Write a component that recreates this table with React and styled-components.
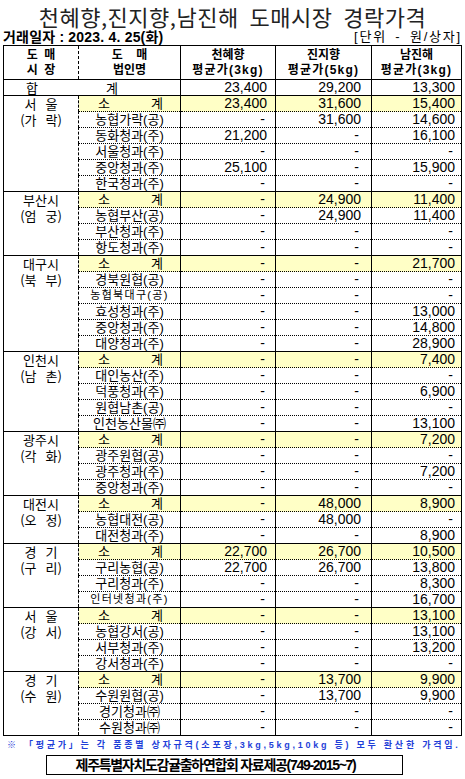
import React from "react";
import styled, { createGlobalStyle } from "styled-components";

const GlobalStyle = createGlobalStyle`
  html, body {
    margin: 0;
    padding: 0;
    background: #fff;
  }
  body {
    font-family: "Liberation Sans Narrow", "Liberation Sans", "Noto Sans CJK KR", sans-serif;
    color: #000;
  }
`;

const Page = styled.div`
  width: 465px;
`;

const Title = styled.h1`
  margin: 0 0 -3px;
  height: 32px;
  line-height: 32px;
  font-family: "Noto Sans CJK KR", sans-serif;
  font-size: 22px;
  font-weight: 400;
  letter-spacing: 0.5px;
  color: #222;
  text-align: center;
  white-space: pre;
`;

const InfoBar = styled.div`
  display: flex;
  justify-content: space-between;
  align-items: center;
  height: 16px;
  padding: 0 3px 0 3px;
  line-height: 16px;
`;

const TradeDate = styled.span`
  font-family: "Liberation Sans", "Noto Sans CJK KR", sans-serif;
  font-size: 14px;
  font-weight: 700;
  letter-spacing: 0.2px;
`;

const Unit = styled.span`
  font-family: "Liberation Sans", "Noto Sans CJK KR", sans-serif;
  font-size: 13px;
  letter-spacing: 1.8px;
  word-spacing: 3px;
`;

const Sheet = styled.table`
  border-collapse: collapse;
  table-layout: fixed;
  width: 459px;
  margin-left: 3px;
  border: 1px solid #000;
  font-size: 13px;
`;

const HeadCell = styled.th`
  height: 33px;
  padding: 0;
  border-right: 1px ${(p) => (p.$dashed ? "dashed" : "solid")} #000;
  border-bottom: 1px solid #000;
  font-family: "Liberation Sans", "Noto Sans CJK KR", sans-serif;
  font-size: 12px;
  font-weight: 700;
  line-height: 15px;
  text-align: center;
  vertical-align: middle;
`;

const HeadLine = styled.div`
  white-space: pre;
  letter-spacing: ${(p) => (p.$wide ? "1.2px" : "0")};
`;

const Row = styled.tr`
  height: 16px;
`;

const TotalCell = styled.td`
  padding: 0 0 0 22px;
  border-right: 1px solid #000;
  border-bottom: 1px solid #000;
  line-height: 15px;
`;

const TotalLabel = styled.div`
  display: flex;
  gap: 68px;
  font-family: "Noto Sans CJK KR", sans-serif;
`;

const MarketCell = styled.td`
  padding: 0;
  border-top: 1px solid #000;
  border-right: 1px dashed #000;
  vertical-align: top;
  text-align: center;
  font-family: "Noto Sans CJK KR", sans-serif;
  line-height: 16px;
  word-spacing: 6px;
  white-space: pre;
`;

const NameCell = styled.td`
  padding: 0;
  border-top: 1px ${(p) => (p.$first ? "solid" : "dotted")} #000;
  border-right: 1px solid #000;
  background: ${(p) => (p.$sub ? "#ffffc6" : "transparent")};
  text-align: center;
  line-height: 15px;
  font-size: ${(p) => (p.$tight ? "11px" : "13px")};
  letter-spacing: ${(p) => (p.$tight ? "1.3px" : "0")};
  white-space: nowrap;
`;

const SubLabel = styled.div`
  display: flex;
  justify-content: space-between;
  padding: 0 17px 0 19px;
`;

const NumCell = styled.td`
  padding: 0 ${(p) => p.$pad}px 0 0;
  border-top: 1px ${(p) => (p.$first ? "solid" : "dotted")} #000;
  border-right: 1px solid #000;
  background: ${(p) => (p.$sub ? "#ffffc6" : "transparent")};
  text-align: right;
  font-size: 14px;
  line-height: 15px;
  white-space: nowrap;
`;

const Dash = styled.span`
  display: inline-block;
  padding-right: 2px;
`;

const Note = styled.p`
  margin: 1px 0 0;
  padding-left: 7px;
  height: 16px;
  line-height: 16px;
  font-family: "Liberation Sans", "Noto Sans CJK KR", sans-serif;
  font-size: 9px;
  font-weight: 700;
  letter-spacing: 2.75px;
  color: #1f3fd8;
  white-space: nowrap;
`;

const SourceBox = styled.div`
  box-sizing: border-box;
  width: 357px;
  height: 20px;
  margin: 2px 0 0 46px;
  padding-right: 18px;
  border: 1px solid #000;
  text-align: center;
  line-height: 18px;
  font-family: "Liberation Sans", "Noto Sans CJK KR", sans-serif;
  font-size: 14px;
  font-weight: 700;
  letter-spacing: -1.3px;
`;

const columns = [
  { width: 75 },
  { width: 102 },
  { width: 95, pad: 8 },
  { width: 96, pad: 10 },
  { width: 90, pad: 6 },
];

const groups = [
  {
    market: ["서 울", "(가 락)"],
    rows: [
      ["소계", "23,400", "31,600", "15,400"],
      ["농협가락(공)", "-", "31,600", "14,600"],
      ["동화청과(주)", "21,200", "-", "16,100"],
      ["서울청과(주)", "-", "-", "-"],
      ["중앙청과(주)", "25,100", "-", "15,900"],
      ["한국청과(주)", "-", "-", "-"],
    ],
  },
  {
    market: ["부산시", "(엄 궁)"],
    rows: [
      ["소계", "-", "24,900", "11,400"],
      ["농협부산(공)", "-", "24,900", "11,400"],
      ["부산청과(주)", "-", "-", "-"],
      ["항도청과(주)", "-", "-", "-"],
    ],
  },
  {
    market: ["대구시", "(북 부)"],
    rows: [
      ["소계", "-", "-", "21,700"],
      ["경북원협(공)", "-", "-", "-"],
      ["농협북대구(공)", "-", "-", "-"],
      ["효성청과(주)", "-", "-", "13,000"],
      ["중앙청과(주)", "-", "-", "14,800"],
      ["대양청과(주)", "-", "-", "28,900"],
    ],
  },
  {
    market: ["인천시", "(남 촌)"],
    rows: [
      ["소계", "-", "-", "7,400"],
      ["대인농산(주)", "-", "-", "-"],
      ["덕풍청과(주)", "-", "-", "6,900"],
      ["원협남촌(공)", "-", "-", "-"],
      ["인천농산물㈜", "-", "-", "13,100"],
    ],
  },
  {
    market: ["광주시", "(각 화)"],
    rows: [
      ["소계", "-", "-", "7,200"],
      ["광주원협(공)", "-", "-", "-"],
      ["광주청과(주)", "-", "-", "7,200"],
      ["중앙청과(주)", "-", "-", "-"],
    ],
  },
  {
    market: ["대전시", "(오 정)"],
    rows: [
      ["소계", "-", "48,000", "8,900"],
      ["농협대전(공)", "-", "48,000", "-"],
      ["대전청과(주)", "-", "-", "8,900"],
    ],
  },
  {
    market: ["경 기", "(구 리)"],
    rows: [
      ["소계", "22,700", "26,700", "10,500"],
      ["구리농협(공)", "22,700", "26,700", "13,800"],
      ["구리청과(주)", "-", "-", "8,300"],
      ["인터넷청과(주)", "-", "-", "16,700"],
    ],
  },
  {
    market: ["서 울", "(강 서)"],
    rows: [
      ["소계", "-", "-", "13,100"],
      ["농협강서(공)", "-", "-", "13,100"],
      ["서부청과(주)", "-", "-", "13,200"],
      ["강서청과(주)", "-", "-", "-"],
    ],
  },
  {
    market: ["경 기", "(수 원)"],
    rows: [
      ["소계", "-", "13,700", "9,900"],
      ["수원원협(공)", "-", "13,700", "9,900"],
      ["경기청과㈜", "-", "-", "-"],
      ["수원청과㈜", "-", "-", "-"],
    ],
  },
];

const varieties = [
  ["천혜향", "평균가(3kg)"],
  ["진지향", "평균가(5kg)"],
  ["남진해", "평균가(3kg)"],
];

const tightNames = ["농협북대구(공)", "인터넷청과(주)"];

function Price({ value, pad, first, sub }) {
  return (
    <NumCell $pad={pad} $first={first} $sub={sub}>
      {value === "-" ? <Dash>-</Dash> : value}
    </NumCell>
  );
}

function MarketGroup({ group }) {
  return group.rows.map((row, i) => {
    const first = i === 0;
    const [name, ...prices] = row;
    return (
      <Row key={name + i}>
        {first && (
          <MarketCell rowSpan={group.rows.length}>
            {group.market.join("\n")}
          </MarketCell>
        )}
        <NameCell $first={first} $sub={first} $tight={tightNames.includes(name)}>
          {first ? (
            <SubLabel>
              <span>소</span>
              <span>계</span>
            </SubLabel>
          ) : (
            name
          )}
        </NameCell>
        {prices.map((p, j) => (
          <Price key={j} value={p} pad={columns[j + 2].pad} first={first} sub={first} />
        ))}
      </Row>
    );
  });
}

export default function App() {
  return (
    <Page>
      <GlobalStyle />
      <Title>천혜향,진지향,남진해  도매시장  경락가격</Title>
      <InfoBar>
        <TradeDate>거래일자 : 2023. 4. 25(화)</TradeDate>
        <Unit>[단위 - 원/상자]</Unit>
      </InfoBar>
      <Sheet>
        <colgroup>
          {columns.map((c, i) => (
            <col key={i} style={{ width: c.width }} />
          ))}
        </colgroup>
        <thead>
          <tr>
            <HeadCell $dashed>
              <HeadLine>{"도  매"}</HeadLine>
              <HeadLine>{"시  장"}</HeadLine>
            </HeadCell>
            <HeadCell>
              <HeadLine>{"도    매"}</HeadLine>
              <HeadLine>법인명</HeadLine>
            </HeadCell>
            {varieties.map(([name, unit]) => (
              <HeadCell key={name}>
                <HeadLine>{name}</HeadLine>
                <HeadLine $wide>{unit}</HeadLine>
              </HeadCell>
            ))}
          </tr>
        </thead>
        <tbody>
          <Row>
            <TotalCell colSpan={2}>
              <TotalLabel>
                <span>합</span>
                <span>계</span>
              </TotalLabel>
            </TotalCell>
            <NumCell $pad={8} $first>23,400</NumCell>
            <NumCell $pad={10} $first>29,200</NumCell>
            <NumCell $pad={6} $first>13,300</NumCell>
          </Row>
          {groups.map((g, i) => (
            <MarketGroup key={i} group={g} />
          ))}
        </tbody>
      </Sheet>
      <Note>※ 「평균가」는 각 품종별 상자규격(소포장,3kg,5kg,10kg 등) 모두 환산한 가격임.</Note>
      <SourceBox>제주특별자치도감귤출하연합회 자료제공(749-2015~7)</SourceBox>
    </Page>
  );
}
